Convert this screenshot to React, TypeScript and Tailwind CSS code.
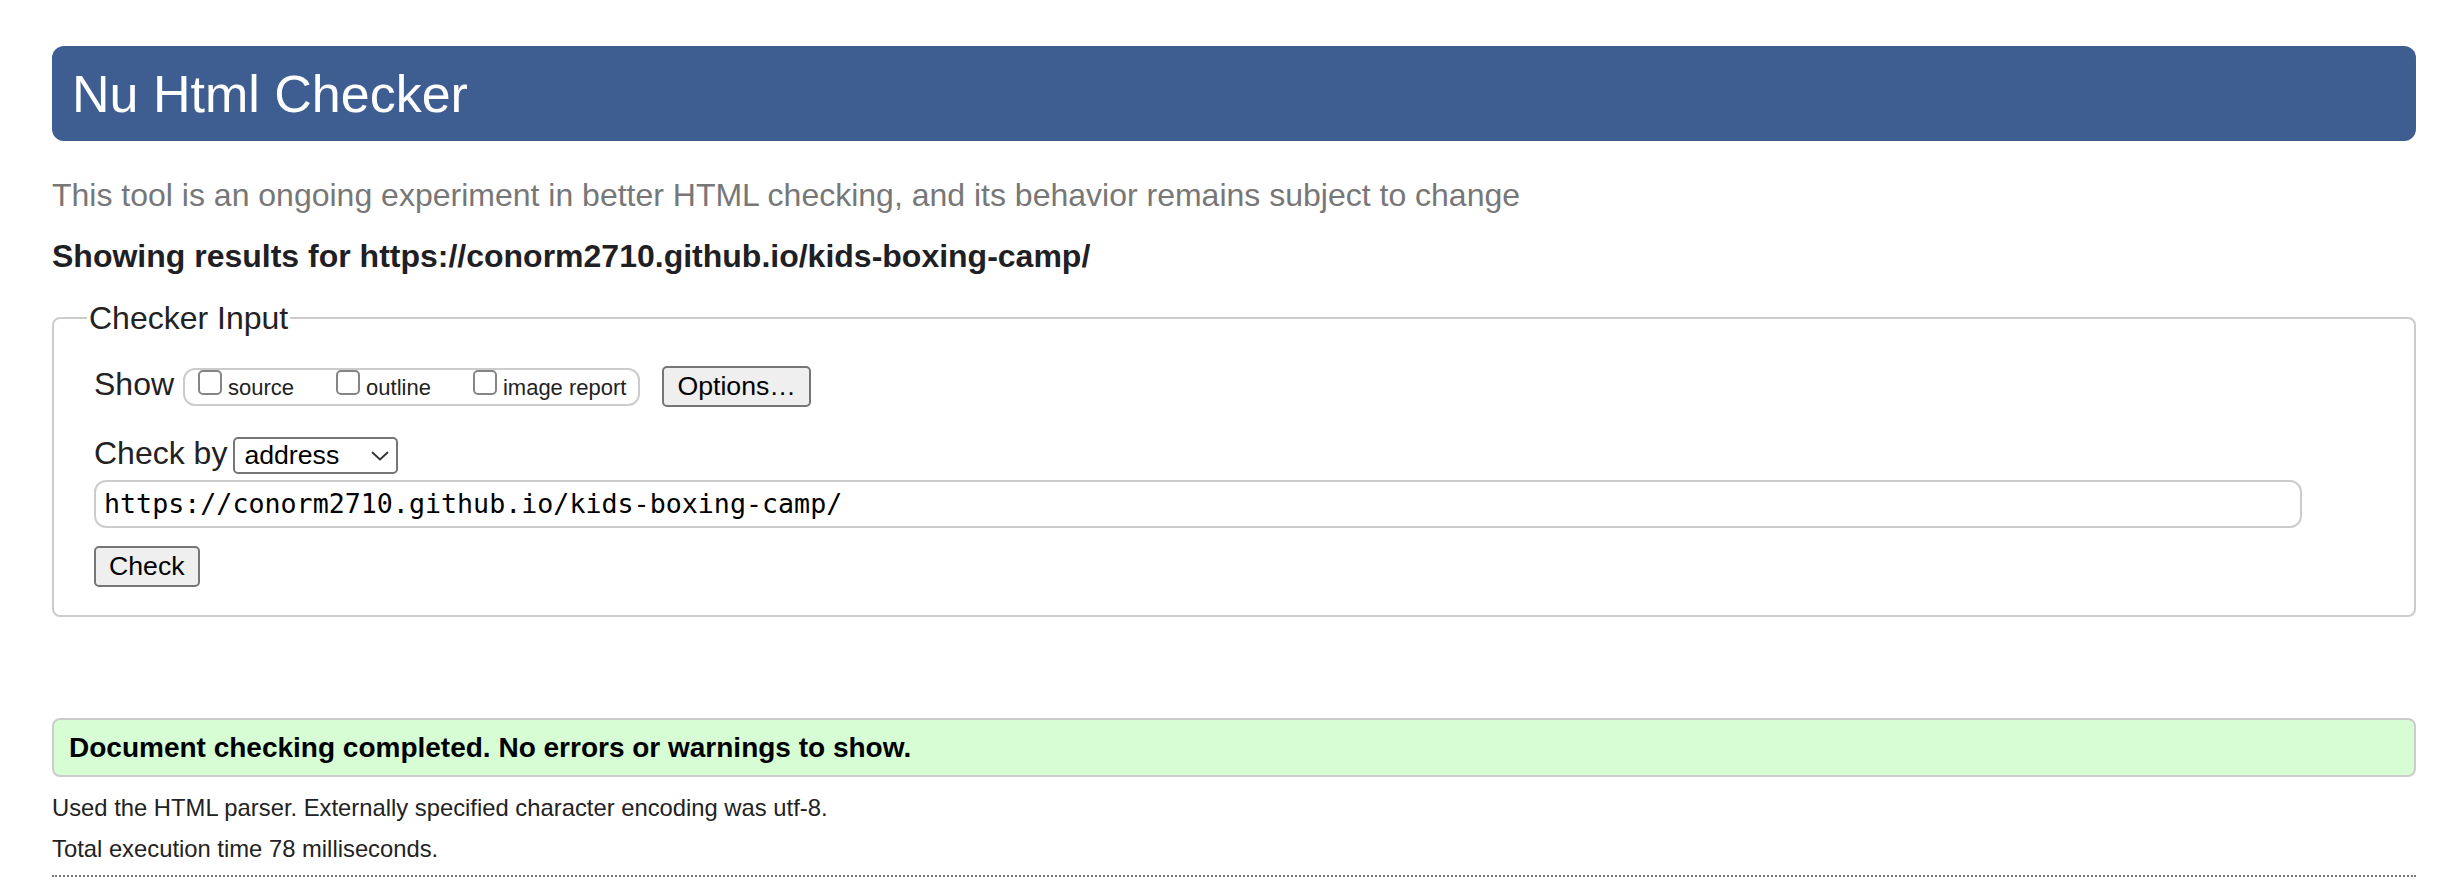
import React from "react";

function Box({ label }: { label: string }) {
  return (
    <label className="flex items-baseline gap-[6px]">
      <span className="block w-[24px] h-[25px] border-2 border-[#858585] rounded-[5px] bg-white"></span>
      <span className="text-[22px] leading-[normal] text-[#222]">{label}</span>
    </label>
  );
}

export default function App() {
  return (
    <div className="min-h-screen bg-white font-['Liberation_Sans',Arial,sans-serif] text-[#222]">
      <div className="pt-[46px] pl-[52px] w-[2416px]">
        <h1 className="h-[95px] rounded-[12px] bg-[#3e5d91] flex items-center pl-[20px] text-[52px] leading-[normal] text-white font-normal">
          Nu Html Checker
        </h1>
        <p className="mt-[34px] text-[32px] leading-[40px] text-[#777]">
          This tool is an ongoing experiment in better HTML checking, and its behavior remains subject to change
        </p>
        <p className="mt-[21px] text-[32px] leading-[40px] font-bold text-[#1f2024]">
          Showing results for https://conorm2710.github.io/kids-boxing-camp/
        </p>

        <fieldset className="mt-[24px] border-2 border-[#cccccc] rounded-[8px] min-w-0">
          <legend className="ml-[33px] px-[2px] text-[32px] leading-[36px] text-[#222]">Checker Input</legend>
          <div className="pl-[40px] pt-[30px] pb-[28px]">
            <div className="flex items-baseline">
              <span className="text-[32px] leading-[normal]">Show</span>
              <div className="ml-[9px] h-[38px] flex items-baseline border-2 border-[#cccccc] rounded-[12px] pl-[13px] pr-[12px]">
                <Box label="source" />
                <div className="ml-[42px]">
                  <Box label="outline" />
                </div>
                <div className="ml-[42px]">
                  <Box label="image report" />
                </div>
              </div>
              <button className="ml-[22px] h-[41px] px-[13px] border-2 border-[#767676] rounded-[5px] bg-[#efefef] text-[26.67px] leading-[37px] text-black">
                Options…
              </button>
            </div>

            <div className="mt-[28px] flex items-baseline">
              <span className="text-[32px] leading-[normal]">Check by</span>
              <div className="ml-[6px] w-[165px] h-[37px] border-2 border-[#767676] rounded-[5px] bg-white flex items-baseline justify-between pl-[9px] pr-[7px]">
                <span className="text-[26.67px] leading-[33px] text-black">address</span>
                <svg width="18" height="10" viewBox="0 0 18 10" className="self-center">
                  <path d="M1.5 1.5 L9 8.5 L16.5 1.5" fill="none" stroke="#333" strokeWidth="1.8" strokeLinecap="round" strokeLinejoin="round" />
                </svg>
              </div>
            </div>

            <div className="mt-[6px] w-[2208px] h-[48px] border-2 border-[#cccccc] rounded-[12px] flex items-center pl-[8px] font-['DejaVu_Sans_Mono',monospace] text-[26.67px] text-black">
              https://conorm2710.github.io/kids-boxing-camp/
            </div>

            <button className="mt-[18px] h-[41px] px-[13px] border-2 border-[#767676] rounded-[5px] bg-[#efefef] text-[26.67px] leading-[37px] text-black">
              Check
            </button>
          </div>
        </fieldset>

        <div className="mt-[101px] h-[59px] border-2 border-[#cccccc] rounded-[8px] bg-[#d6fdd4] flex items-center pl-[15px]">
          <span className="text-[28px] font-bold text-black">
            Document checking completed. No errors or warnings to show.
          </span>
        </div>

        <p className="mt-[10px] text-[23.8px] leading-[41px] text-[#222]">
          Used the HTML parser. Externally specified character encoding was utf-8.
        </p>
        <p className="text-[23.8px] leading-[41px] text-[#222]">Total execution time 78 milliseconds.</p>
        <div className="mt-[6px] border-t-2 border-dotted border-[#777]"></div>
      </div>
    </div>
  );
}
